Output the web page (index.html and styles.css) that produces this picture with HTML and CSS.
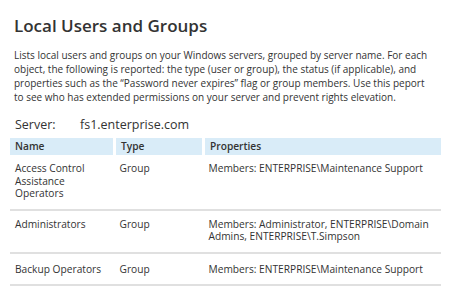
FILE: index.html
```html
<!DOCTYPE html>
<html lang="en">
<head>
  <meta charset="UTF-8">
  <title>Local Users and Groups</title>
  <link rel="stylesheet" href="styles.css">
</head>
<body>
  <div class="report">
    <h1>Local Users and Groups</h1>
    <p class="intro">Lists local users and groups on your Windows servers, grouped by server name. For each object, the following is reported: the type (user or group), the status (if applicable), and properties such as the “Password never expires” flag or group members. Use this peport to see who has extended permissions on your server and prevent rights elevation.</p>
    <div class="server">
      <span class="server-label">Server:</span>
      <span class="server-name">fs1.enterprise.com</span>
    </div>
    <table class="report-table">
      <thead>
        <tr>
          <th class="col-name">Name</th>
          <th class="col-type">Type</th>
          <th>Properties</th>
        </tr>
      </thead>
      <tbody>
        <tr>
          <td>Access Control Assistance Operators</td>
          <td>Group</td>
          <td>Members: ENTERPRISE\Maintenance Support</td>
        </tr>
        <tr>
          <td>Administrators</td>
          <td>Group</td>
          <td>Members: Administrator, ENTERPRISE\Domain Admins, ENTERPRISE\T.Simpson</td>
        </tr>
        <tr class="last-row">
          <td>Backup Operators</td>
          <td>Group</td>
          <td>Members: ENTERPRISE\Maintenance Support</td>
        </tr>
      </tbody>
    </table>
  </div>
</body>
</html>
```

FILE: styles.css
```css
body {
  font-family: 'Open Sans', 'DejaVu Sans', sans-serif;
  background-color: white;
  margin: 0;
  padding: 0;
  color: #333;
}
.report {
  padding: 14px 9px 0 10px;
}
h1 {
  margin: 0 0 10px 0;
  padding-left: 4px;
  font-size: 17px;
  line-height: 24px;
  font-weight: 600;
  color: #333;
}
.intro {
  width: 416px;
  margin: 0 0 13px 0;
  padding-left: 4px;
  font-size: 10px;
  line-height: 14px;
  color: #333;
}
.server {
  display: flex;
  padding-left: 5px;
  font-size: 12.5px;
  line-height: 16px;
  margin-bottom: 5px;
}
.server-label {
  width: 65px;
}
.report-table {
  width: 431px;
  border-collapse: collapse;
  font-size: 10.2px;
  line-height: 12.5px;
}
.report-table th {
  background-color: #d9ecf8;
  text-align: left;
  font-weight: 600;
  padding: 2px 5px;
  height: 13px;
  border-right: 3px solid white;
}
.report-table th:last-child {
  border-right: none;
}
.report-table .col-name {
  width: 93px;
}
.report-table .col-type {
  width: 76px;
}
.report-table td {
  vertical-align: top;
  padding: 7px 5px 9px;
  border-bottom: 2px solid #e0e0e0;
}
.report-table .last-row td {
  padding-top: 9px;
}
```
